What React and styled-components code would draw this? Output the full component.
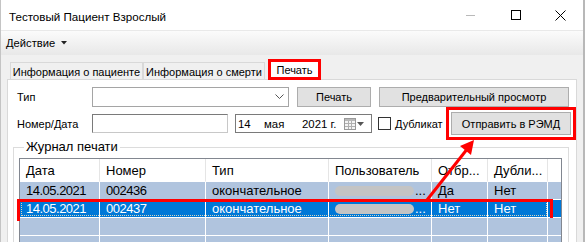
import styled, { createGlobalStyle } from "styled-components";

const GlobalStyle = createGlobalStyle`
  html, body {
    margin: 0;
    padding: 0;
    background: #ffffff;
  }
  body {
    font-family: "Liberation Sans", Arial, sans-serif;
    font-size: 11px;
    color: #000;
  }
`;

const Window = styled.div`
  position: relative;
  width: 585px;
  height: 242px;
  overflow: hidden;
  background: #f0f0f0;
  box-sizing: border-box;
  border-left: 1px solid #c4c4c4;
  border-right: 2px solid #b8b8b8;
`;

const TitleBar = styled.div`
  height: 30px;
  background: #ffffff;
  display: flex;
  align-items: center;
  padding-left: 8px;
`;

const Title = styled.div`
  flex: 1;
  font-size: 11.6px;
  padding-top: 2px;
`;

const Controls = styled.div`
  display: flex;
  align-items: center;
  height: 100%;
`;

const Control = styled.div`
  width: 45px;
  height: 30px;
  display: flex;
  align-items: center;
  justify-content: center;
`;

const MinLine = styled.div`
  width: 9px;
  height: 1px;
  background: #b9b9b9;
`;

const MaxBox = styled.div`
  width: 8px;
  height: 8px;
  border: 1px solid #000;
`;

const MenuBar = styled.div`
  height: 24px;
  border-top: 1px solid #e9e9e9;
  background: linear-gradient(#fbfbfb, #e8e8e8);
  display: flex;
  align-items: center;
  padding-left: 5px;
`;

const MenuItem = styled.div`
  display: flex;
  align-items: center;
  gap: 6px;
  font-size: 11.2px;
`;

const TabStrip = styled.div`
  height: 24px;
  display: flex;
  align-items: flex-end;
  padding-left: 9px;
  position: relative;
  z-index: 2;
`;

const Tab = styled.div`
  width: ${(p) => p.$w}px;
  height: 17px;
  box-sizing: border-box;
  background: #f0f0f0;
  border: 1px solid #d9d9d9;
  border-bottom: none;
  margin-right: ${(p) => p.$mr || 0}px;
  display: flex;
  align-items: center;
  justify-content: center;
  white-space: nowrap;
  padding-top: 1px;
`;

const ActiveTab = styled(Tab)`
  height: 21px;
  margin-bottom: -1px;
  background: #ffffff;
  border: 3px solid #ff0000;
  padding-top: 0;
`;

const Panel = styled.div`
  margin-left: 6px;
  width: 570px;
  height: 200px;
  box-sizing: border-box;
  background: #ffffff;
  border: 1px solid #d9d9d9;
  padding: 7px 5px 0 5px;
`;

const FormRow = styled.div`
  display: flex;
  align-items: center;
  height: ${(p) => p.$h}px;
  margin-top: ${(p) => p.$mt || 0}px;
  padding-left: 4px;
`;

const Label = styled.div`
  width: 75px;
  flex-shrink: 0;
`;

const Combo = styled.div`
  width: 197px;
  height: 20px;
  box-sizing: border-box;
  border: 1px solid #a5a5a5;
  display: flex;
  align-items: center;
  justify-content: flex-end;
  padding-right: 4px;
`;

const Button = styled.div`
  width: ${(p) => p.$w}px;
  height: ${(p) => p.$h || 20}px;
  margin-left: ${(p) => p.$ml || 0}px;
  box-sizing: border-box;
  background: #e1e1e1;
  border: 1px solid #adadad;
  display: flex;
  align-items: center;
  justify-content: center;
  white-space: nowrap;
  flex-shrink: 0;
`;

const SendButton = styled(Button)`
  margin-left: auto;
  outline: 3px solid #ff0000;
  outline-offset: 2px;
`;

const TextBox = styled.div`
  width: 136px;
  height: 19px;
  box-sizing: border-box;
  border: 1px solid #7a7a7a;
  border-right-color: #c8c8c8;
  border-bottom-color: #c8c8c8;
`;

const DatePicker = styled.div`
  width: 137px;
  height: 19px;
  margin-left: 7px;
  box-sizing: border-box;
  border: 1px solid #7a7a7a;
  display: flex;
  align-items: center;
  padding-left: 2px;
  font-size: 11.4px;
`;

const DatePart = styled.span`
  width: ${(p) => p.$w}px;
  flex-shrink: 0;
`;

const CheckBox = styled.div`
  width: 13px;
  height: 13px;
  box-sizing: border-box;
  border: 1px solid #333;
  background: #fff;
  margin-left: 6px;
  flex-shrink: 0;
`;

const CheckLabel = styled.span`
  margin-left: 4px;
`;

const GroupBox = styled.fieldset`
  margin: 5px 2px 0 0;
  padding: 4px 6px 0 5px;
  border: 1px solid #dcdcdc;
  min-width: 0;
  height: 120px;
  box-sizing: border-box;
  font-size: 13px;
`;

const Legend = styled.legend`
  margin-left: 5px;
  padding: 0 2px;
  line-height: 14px;
`;

const Grid = styled.div`
  border-left: 1px solid #828790;
  border-top: 1px solid #828790;
  border-right: 1px solid #828790;
  height: 100px;
  background: #ffffff;
`;

const Row = styled.div`
  position: relative;
  display: grid;
  grid-template-columns: 80px 106px 123px 103px 56px 60px 1fr;
  height: ${(p) => (p.$header ? 23 : 18)}px;
  background: ${(p) =>
    p.$header ? "#ffffff" : p.$selected ? "#0078d7" : "#b0c4de"};
  color: ${(p) => (p.$selected ? "#ffffff" : "#000000")};

  ${(p) =>
    p.$marked &&
    `
    &::before {
      content: "";
      position: absolute;
      left: 1px;
      right: 14px;
      top: 1px;
      bottom: 2px;
      border: 1px dotted rgba(255, 230, 180, 0.85);
      pointer-events: none;
    }
    &::after {
      content: "";
      position: absolute;
      left: -3px;
      right: 8px;
      top: -1px;
      bottom: -3px;
      border: 3px solid #ff0000;
      pointer-events: none;
    }
  `}
`;

const Cell = styled.div`
  box-sizing: border-box;
  padding-left: 6px;
  display: flex;
  align-items: center;
  white-space: nowrap;
  overflow: hidden;
  letter-spacing: ${(p) => (p.$num ? "-0.5px" : "0")};
  border-right: 1px solid ${(p) => (p.$header ? "#e5e5e5" : "#ffffff")};
  border-bottom: 1px solid #ffffff;
  &:last-child {
    border-right: none;
  }
`;

const Blur = styled.span`
  display: inline-block;
  width: 79px;
  height: 10px;
  border-radius: 5px;
  background: #c4c4c4;
  margin-right: 1px;
`;

const Arrow = styled.svg`
  position: absolute;
  left: 415px;
  top: 132px;
  pointer-events: none;
  z-index: 5;
`;

const columns = ["Дата", "Номер", "Тип", "Пользователь", "Отбр...", "Дубли...", ""];

const rows = [
  { date: "14.05.2021", num: "002436", type: "окончательное", sent: "Да", dup: "Нет" },
  { date: "14.05.2021", num: "002437", type: "окончательное", sent: "Нет", dup: "Нет", selected: true },
  null,
  null,
];

function Chevron() {
  return (
    <svg width="9" height="6" viewBox="0 0 9 6">
      <polyline points="0.5,0.5 4.5,4.5 8.5,0.5" fill="none" stroke="#555" strokeWidth="1" />
    </svg>
  );
}

function CalendarIcon() {
  return (
    <svg width="22" height="14" viewBox="0 0 22 14" style={{ marginLeft: 8 }}>
      <rect x="0.5" y="1.5" width="11" height="11" fill="#f4f4f4" stroke="#9a9a9a" />
      <rect x="1" y="2" width="10" height="2" fill="#b8b8b8" />
      <g stroke="#b0b0b0" strokeWidth="1">
        <line x1="1" y1="6.5" x2="11" y2="6.5" />
        <line x1="1" y1="9.5" x2="11" y2="9.5" />
        <line x1="4.5" y1="4" x2="4.5" y2="12" />
        <line x1="7.5" y1="4" x2="7.5" y2="12" />
      </g>
      <polygon points="13,5 20,5 16.5,9" fill="#555" />
    </svg>
  );
}

export default function App() {
  return (
    <>
      <GlobalStyle />
      <Window>
        <TitleBar>
          <Title>Тестовый Пациент Взрослый</Title>
          <Controls>
            <Control>
              <MinLine />
            </Control>
            <Control>
              <MaxBox />
            </Control>
            <Control>
              <svg width="11" height="11" viewBox="0 0 11 11">
                <line x1="0.5" y1="0.5" x2="10.5" y2="10.5" stroke="#000" />
                <line x1="10.5" y1="0.5" x2="0.5" y2="10.5" stroke="#000" />
              </svg>
            </Control>
          </Controls>
        </TitleBar>

        <MenuBar>
          <MenuItem>
            Действие
            <svg width="6" height="4" viewBox="0 0 6 4">
              <polygon points="0,0 6,0 3,3.5" fill="#222" />
            </svg>
          </MenuItem>
        </MenuBar>

        <TabStrip>
          <Tab $w={133}>Информация о пациенте</Tab>
          <Tab $w={122} $mr={3}>Информация о смерти</Tab>
          <ActiveTab $w={53}>Печать</ActiveTab>
        </TabStrip>

        <Panel>
          <FormRow $h={20}>
            <Label>Тип</Label>
            <Combo>
              <Chevron />
            </Combo>
            <Button $w={74} $ml={8}>
              Печать
            </Button>
            <Button $w={190} $ml={8}>
              Предварительный просмотр
            </Button>
          </FormRow>

          <FormRow $h={23} $mt={5}>
            <Label>Номер/Дата</Label>
            <TextBox />
            <DatePicker>
              <DatePart $w={26}>14</DatePart>
              <DatePart $w={38}>мая</DatePart>
              <span>2021 г.</span>
              <CalendarIcon />
            </DatePicker>
            <CheckBox />
            <CheckLabel>Дубликат</CheckLabel>
            <SendButton $w={120} $h={23}>
              Отправить в РЭМД
            </SendButton>
          </FormRow>

          <GroupBox>
            <Legend>Журнал печати</Legend>
            <Grid>
              <Row $header>
                {columns.map((c, i) => (
                  <Cell $header key={i}>
                    {c}
                  </Cell>
                ))}
              </Row>
              {rows.map((r, i) =>
                r ? (
                  <Row key={i} $selected={r.selected} $marked={r.selected}>
                    <Cell $num>{r.date}</Cell>
                    <Cell $num>{r.num}</Cell>
                    <Cell>{r.type}</Cell>
                    <Cell>
                      <Blur />
                      ...
                    </Cell>
                    <Cell>{r.sent}</Cell>
                    <Cell>{r.dup}</Cell>
                    <Cell />
                  </Row>
                ) : (
                  <Row key={i}>
                    {columns.map((c, j) => (
                      <Cell key={j} />
                    ))}
                  </Row>
                )
              )}
            </Grid>
          </GroupBox>
        </Panel>

        <Arrow width="70" height="75" viewBox="0 0 70 75">
          <line x1="11" y1="68" x2="52" y2="16" stroke="#ff0000" strokeWidth="3" />
          <polygon points="58,8 44,14 55,23" fill="#ff0000" />
        </Arrow>
      </Window>
    </>
  );
}
